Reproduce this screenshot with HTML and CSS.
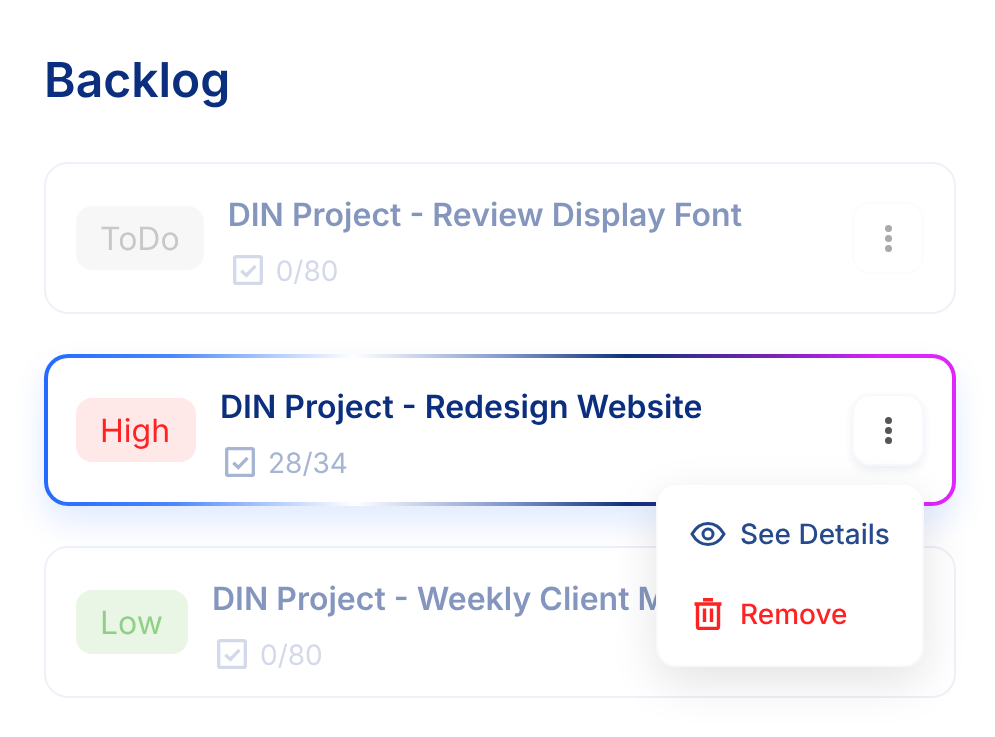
FILE: index.html
```html
<!DOCTYPE html>
<html lang="en">
<head>
<meta charset="utf-8">
<title>Backlog</title>
<link rel="stylesheet" href="styles.css">
</head>
<body>
<main class="board">
  <h1 class="board-title">Backlog</h1>
  <div class="task-list">
    <article class="card card-dim">
      <div class="row">
        <span class="badge badge-todo">ToDo</span>
        <div class="info">
          <h2 class="task-title">DIN Project - Review Display Font</h2>
          <div class="sub">
            <svg class="check" viewBox="0 0 24 24" fill="none" stroke="currentColor" stroke-width="2"><rect x="4" y="4" width="16" height="16" rx="1"/><path d="M8 12.500l3 2.800 5.500-5.800"/></svg>
            <span>0/80</span>
          </div>
        </div>
        <button class="more"><i></i><i></i><i></i></button>
      </div>
    </article>
    <article class="card card-active">
      <div class="row">
        <span class="badge badge-high">High</span>
        <div class="info">
          <h2 class="task-title">DIN Project - Redesign Website</h2>
          <div class="sub">
            <svg class="check" viewBox="0 0 24 24" fill="none" stroke="currentColor" stroke-width="2"><rect x="4" y="4" width="16" height="16" rx="1"/><path d="M8 12.500l3 2.800 5.500-5.800"/></svg>
            <span>28/34</span>
          </div>
        </div>
        <button class="more"><i></i><i></i><i></i></button>
      </div>
      <div class="menu">
        <div class="menu-item">
          <svg class="eye" viewBox="0 0 36 26" fill="none" stroke="currentColor" stroke-width="3"><path d="M2 13C6 6 11 2.500 18 2.500S30 6 34 13c-4 7-9 10.500-16 10.500S6 20 2 13z"/><circle cx="18" cy="13" r="5"/></svg>
          <span>See Details</span>
        </div>
        <div class="menu-item menu-danger">
          <svg class="trash" viewBox="0 0 28 32" fill="none" stroke="currentColor" stroke-width="3.400"><path d="M0.500 6h27M9 1.700h10M3.500 6v22.500a2 2 0 0 0 2 2h17a2 2 0 0 0 2-2V6M10.500 10.500v13.500M17.500 10.500v13.500"/></svg>
          <span>Remove</span>
        </div>
      </div>
    </article>
    <article class="card card-dim">
      <div class="row">
        <span class="badge badge-low">Low</span>
        <div class="info">
          <h2 class="task-title">DIN Project - Weekly Client M</h2>
          <div class="sub">
            <svg class="check" viewBox="0 0 24 24" fill="none" stroke="currentColor" stroke-width="2"><rect x="4" y="4" width="16" height="16" rx="1"/><path d="M8 12.500l3 2.800 5.500-5.800"/></svg>
            <span>0/80</span>
          </div>
        </div>
      </div>
    </article>
  </div>
</main>
</body>
</html>
```
FILE: styles.css
```css
* { box-sizing: border-box; }
html, body { margin: 0; height: 100%; background: #fff; }
body { font-family: Inter, "Liberation Sans", sans-serif; overflow: hidden; text-rendering: geometricPrecision; }
.board { padding: 50px 39px 0 44px; will-change: transform; }
.board-title { margin: 0 0 52px; font-size: 48px; line-height: 60px; font-weight: 600; color: #0b2f7e; }
.task-list { display: flex; flex-direction: column; gap: 40px; }
.card { position: relative; height: 152px; border: 2px solid #edf1f8; border-radius: 24px; padding: 0 30px; display: flex; align-items: center; }
.row { flex: 1; display: flex; align-items: center; gap: 24px; }
.card-dim .row { opacity: .5; }
.card-active {
  z-index: 1; border: 4px solid transparent; padding: 0 28px;
  background: linear-gradient(#fff, #fff) padding-box,
    linear-gradient(90deg, #246bfd 0%, #4a86fc 14%, #a9c6fb 24%, #fff 34%, #7f95c9 51%, #0d3178 64%, #7a22b8 80%, #dc22fb 92%, #e026fd 100%) border-box;
  box-shadow: 0 16px 32px rgba(36, 107, 253, .14);
}
.badge { flex: none; height: 64px; padding: 0 24px; border-radius: 16px; font-size: 32px; line-height: 66px; }
.badge-todo { background: #f0f0f0; color: #919191; }
.badge-high { min-width: 120px; background: #ffe8e8; color: #ff2222; }
.badge-low { min-width: 112px; background: #d3eecd; color: #22a10e; }
.info { flex: 1; min-width: 0; padding-top: 10px; }
.task-title { margin: 0; font-size: 32px; line-height: 40px; font-weight: 600; color: #0b2f7e; white-space: nowrap; }
.sub { display: flex; align-items: center; gap: 8px; margin: 16px 0 0 0; height: 40px; color: #a7b4d2; font-size: 28px; line-height: 40px; }
.check { flex: none; width: 40px; height: 40px; margin-top: -2px; }
.more { flex: none; width: 72px; height: 72px; padding: 0; border: 2px solid #f8f9fd; border-radius: 18px; background: #fff; display: flex; flex-direction: column; align-items: center; justify-content: center; gap: 3px; }
.more i { display: block; width: 7px; height: 7px; border-radius: 50%; background: #555; }
.card-active .more { box-shadow: 0 4px 8px rgba(30, 50, 120, .08); }
.menu { position: absolute; top: 125px; right: 28px; width: 268px; height: 184px; padding: 0 32px 2px; background: #fff; border: 2px solid #f8f9fe; border-radius: 20px; box-shadow: 0 16px 48px rgba(0, 0, 0, .11); display: flex; flex-direction: column; justify-content: center; gap: 30px; }
.menu-item { display: flex; align-items: center; gap: 14px; height: 50px; font-size: 28px; font-weight: 500; color: #264a8c; white-space: nowrap; }
.menu-danger { color: #ff2222; }
.eye { flex: none; width: 36px; height: 26px; }
.trash { flex: none; width: 28px; height: 32px; margin: 0 4px; }
```
